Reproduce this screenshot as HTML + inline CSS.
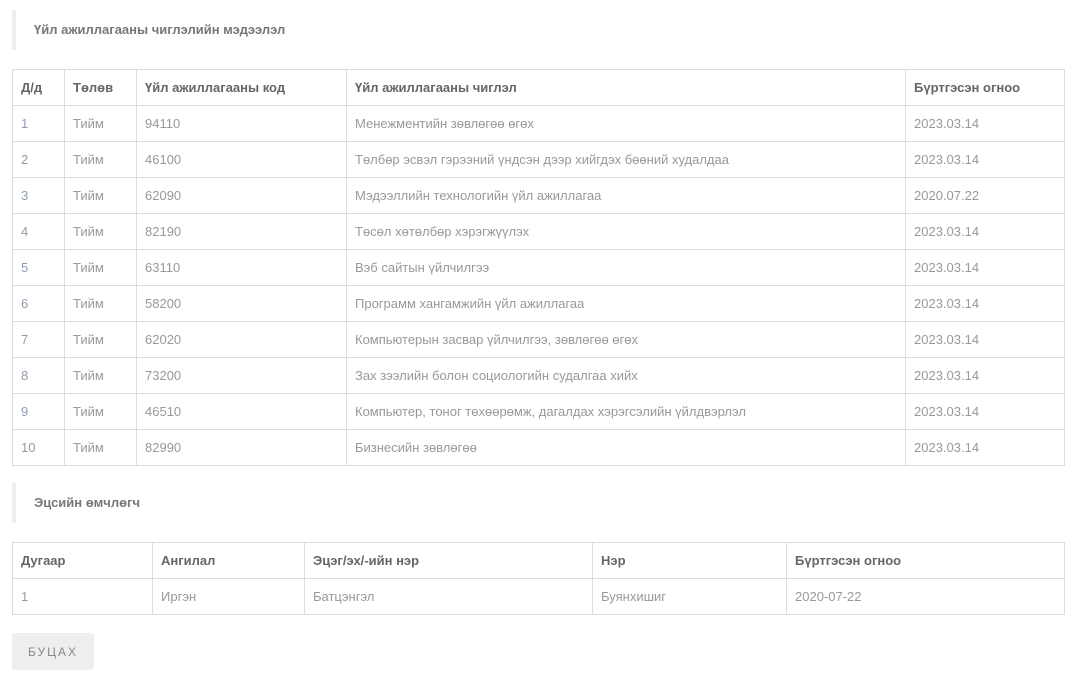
<!DOCTYPE html>
<html><head><meta charset="utf-8"><style>
body{margin:0;background:#fff;font-family:"Liberation Sans",sans-serif;font-size:13px;color:#999;}
.h{position:absolute;left:12px;border-left:4px solid #eee;height:40px;line-height:40px;padding-left:18px;font-weight:bold;color:#777;font-size:13px;}
table{position:absolute;left:12px;width:1052px;border-collapse:collapse;table-layout:fixed;}
td,th{border:1px solid #ddd;height:35px;padding:0 0 0 8px;text-align:left;white-space:nowrap;overflow:hidden;}
th{color:#666;font-weight:bold;}
td:first-child{color:#909cab;}
.btn{position:absolute;left:12px;top:633px;width:82px;height:37px;background:#eee;border-radius:3px;text-align:center;line-height:38px;font-size:12px;letter-spacing:2px;color:#888;}
</style></head><body>
<div class="h" style="top:10px">Үйл ажиллагааны чиглэлийн мэдээлэл</div>
<table style="top:69px">
<colgroup><col style="width:52px"><col style="width:72px"><col style="width:210px"><col style="width:559px"><col style="width:159px"></colgroup>
<tr><th>Д/д</th><th>Төлөв</th><th>Үйл ажиллагааны код</th><th>Үйл ажиллагааны чиглэл</th><th>Бүртгэсэн огноо</th></tr>
<tr><td>1</td><td>Тийм</td><td>94110</td><td>Менежментийн зөвлөгөө өгөх</td><td>2023.03.14</td></tr>
<tr><td>2</td><td>Тийм</td><td>46100</td><td>Төлбөр эсвэл гэрээний үндсэн дээр хийгдэх бөөний худалдаа</td><td>2023.03.14</td></tr>
<tr><td>3</td><td>Тийм</td><td>62090</td><td>Мэдээллийн технологийн үйл ажиллагаа</td><td>2020.07.22</td></tr>
<tr><td>4</td><td>Тийм</td><td>82190</td><td>Төсөл хөтөлбөр хэрэгжүүлэх</td><td>2023.03.14</td></tr>
<tr><td>5</td><td>Тийм</td><td>63110</td><td>Вэб сайтын үйлчилгээ</td><td>2023.03.14</td></tr>
<tr><td>6</td><td>Тийм</td><td>58200</td><td>Программ хангамжийн үйл ажиллагаа</td><td>2023.03.14</td></tr>
<tr><td>7</td><td>Тийм</td><td>62020</td><td>Компьютерын засвар үйлчилгээ, зөвлөгөө өгөх</td><td>2023.03.14</td></tr>
<tr><td>8</td><td>Тийм</td><td>73200</td><td>Зах зээлийн болон социологийн судалгаа хийх</td><td>2023.03.14</td></tr>
<tr><td>9</td><td>Тийм</td><td>46510</td><td>Компьютер, тоног төхөөрөмж, дагалдах хэрэгсэлийн үйлдвэрлэл</td><td>2023.03.14</td></tr>
<tr><td>10</td><td>Тийм</td><td>82990</td><td>Бизнесийн зөвлөгөө</td><td>2023.03.14</td></tr>
</table>
<div class="h" style="top:483px">Эцсийн өмчлөгч</div>
<table style="top:542px">
<colgroup><col style="width:140px"><col style="width:152px"><col style="width:288px"><col style="width:194px"><col style="width:278px"></colgroup>
<tr><th>Дугаар</th><th>Ангилал</th><th>Эцэг/эх/-ийн нэр</th><th>Нэр</th><th>Бүртгэсэн огноо</th></tr>
<tr><td>1</td><td>Иргэн</td><td>Батцэнгэл</td><td>Буянхишиг</td><td>2020-07-22</td></tr>
</table>
<div class="btn">БУЦАХ</div>
</body></html>
